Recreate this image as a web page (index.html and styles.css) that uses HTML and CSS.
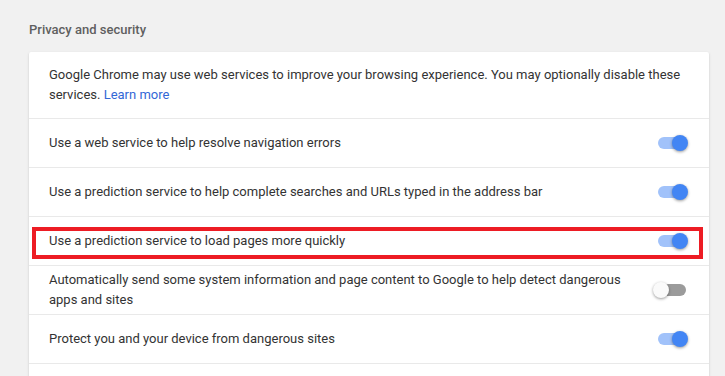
FILE: index.html
```html
<!DOCTYPE html>
<html lang="en">
<head>
  <meta charset="UTF-8" />
  <meta name="viewport" content="width=device-width, initial-scale=1.0"/>
  <title>Settings - Privacy and security</title>
  <link rel="stylesheet" href="styles.css">
</head>
<body>
  <div class="page">
    <h2 class="section-title">Privacy and security</h2>
    <div class="card">
      <div class="intro">
        Google Chrome may use web services to improve your browsing experience. You may optionally disable these
        services. <a href="#">Learn more</a>
      </div>

      <div class="row">
        <div class="label">Use a web service to help resolve navigation errors</div>
        <span class="toggle on"><span class="bar"></span><span class="knob"></span></span>
      </div>

      <div class="row">
        <div class="label">Use a prediction service to help complete searches and URLs typed in the address bar</div>
        <span class="toggle on"><span class="bar"></span><span class="knob"></span></span>
      </div>

      <div class="row marked">
        <div class="label">Use a prediction service to load pages more quickly</div>
        <span class="toggle on"><span class="bar"></span><span class="knob"></span></span>
        <div class="highlight"></div>
      </div>

      <div class="row">
        <div class="label">Automatically send some system information and page content to Google to help detect dangerous apps and sites</div>
        <span class="toggle"><span class="bar"></span><span class="knob"></span></span>
      </div>

      <div class="row last">
        <div class="label">Protect you and your device from dangerous sites</div>
        <span class="toggle on"><span class="bar"></span><span class="knob"></span></span>
      </div>
    </div>
  </div>
</body>
</html>
```

FILE: styles.css
```css
* { margin: 0; padding: 0; box-sizing: border-box; }
body {
  background: #f1f1f1;
  color: #333;
  font-family: Roboto, 'Liberation Sans', sans-serif;
  font-size: 13px;
  overflow: hidden;
}
.page {
  padding: 20px 16px 0 29px;
}
.section-title {
  font-size: 13px;
  font-weight: 500;
  line-height: 20px;
  color: #5f5f5f;
  margin-bottom: 12px;
}
.card {
  background: #fff;
  border-radius: 2px;
  padding-bottom: 48px;
  box-shadow: 0 1px 1px 0 rgba(0, 0, 0, 0.14), 0 1px 3px 0 rgba(0, 0, 0, 0.12);
}
.intro {
  padding: 13px 20px;
  line-height: 20px;
}
.intro a {
  color: #3367d6;
  text-decoration: none;
}
.row {
  position: relative;
  display: flex;
  align-items: center;
  min-height: 49px;
  padding: 4px 20px;
  border-top: 1px solid #e9e9e9;
  line-height: 20px;
}
.row.last {
  min-height: 50px;
  border-bottom: 1px solid #e9e9e9;
}
.label {
  flex: 1;
  padding-right: 24px;
}
.toggle {
  position: relative;
  width: 28px;
  height: 12px;
  margin-right: 3px;
  flex-shrink: 0;
}
.toggle .bar {
  position: absolute;
  inset: 0;
  border-radius: 6px;
  background: #9b9b9b;
}
.toggle .knob {
  position: absolute;
  top: -2px;
  left: -5px;
  width: 16px;
  height: 16px;
  border-radius: 50%;
  background: #fafafa;
  box-shadow: 0 1px 3px rgba(0, 0, 0, 0.4);
}
.toggle.on .bar { background: #a1c2fa; }
.toggle.on .knob {
  left: 14px;
  background: #4285f4;
}
.highlight {
  position: absolute;
  top: 10px;
  left: 3px;
  right: 6px;
  height: 32px;
  border: 4px solid #ed1c24;
}
```
